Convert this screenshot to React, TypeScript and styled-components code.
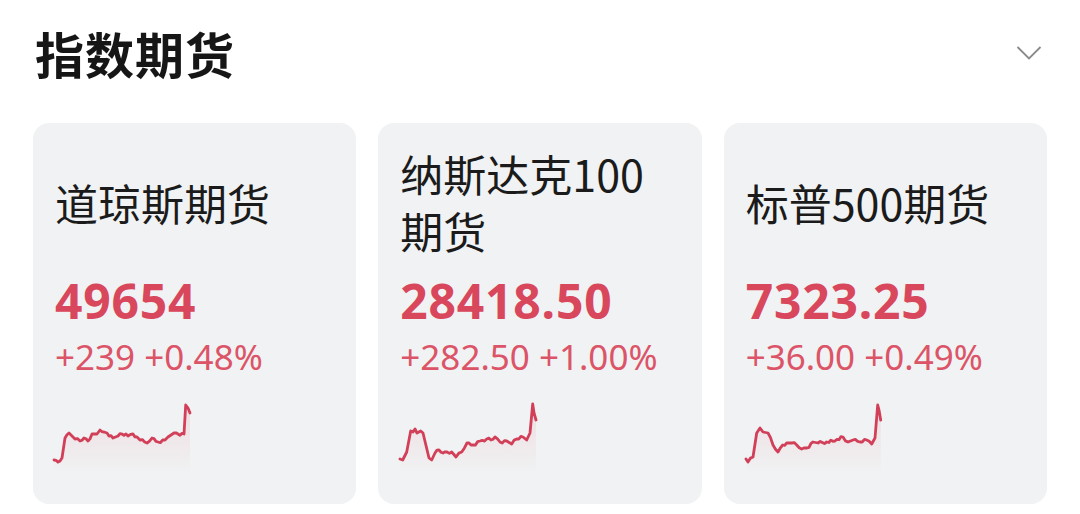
import styled, { createGlobalStyle } from 'styled-components';

type Future = {
	name: string;
	price: string;
	change: string;
	percent: string;
	points: [number, number][];
};

const futures: Future[] = [
	{
		name: '道琼斯期货',
		price: '49654',
		change: '+239',
		percent: '+0.48%',
		points: [
			[3, 65], [9, 66], [11, 63], [14, 43], [18, 38], [21, 41], [24, 44], [29, 46], [33, 43], [37, 46],
			[41, 39], [46, 39], [49, 35], [53, 37], [56, 38], [62, 43], [67, 41], [71, 39], [77, 41], [82, 39],
			[86, 42], [89, 45], [96, 48], [101, 43], [107, 47], [114, 45], [117, 42], [120, 40], [123, 38],
			[127, 39], [133, 39], [134.7, 10], [137, 13], [139, 18],
		],
	},
	{
		name: '纳斯达克100期货',
		price: '28418.50',
		change: '+282.50',
		percent: '+1.00%',
		points: [
			[4, 64], [6.7, 65], [10.7, 57], [14.7, 36], [17, 37], [19, 34], [21, 38], [24.7, 36], [27, 38],
			[33, 63], [35.7, 65], [39, 58], [43, 55], [47, 58], [51, 57], [55.7, 57], [60, 62], [65.7, 57],
			[71, 48], [77, 50], [84, 46], [90.7, 44], [95, 45], [99, 42], [104, 47], [110.7, 46], [115.7, 49],
			[120.7, 44], [127, 42], [130.7, 45], [134, 38], [136.7, 9], [138, 18], [140, 25],
		],
	},
	{
		name: '标普500期货',
		price: '7323.25',
		change: '+36.00',
		percent: '+0.49%',
		points: [
			[4, 64], [6, 67], [11, 62], [14.7, 38], [18, 33], [21, 37], [26, 38], [31, 50], [36, 57],
			[40.7, 50], [44.7, 48], [49.7, 48], [54.7, 50], [59.7, 54], [65, 53], [71, 47], [76, 48],
			[84.7, 47], [93, 46], [101, 42], [106, 47], [111, 45], [118, 47], [124.7, 45], [129.7, 49],
			[133, 43], [135.7, 10], [137, 15], [138.7, 25],
		],
	},
];

// add a small deterministic wobble between the traced points so the line reads as tick data
function roughen(points: [number, number][]): [number, number][] {
	const out: [number, number][] = [];
	points.forEach((p, i) => {
		out.push(p);
		const next = points[i + 1];
		if (!next || next[0] - p[0] < 4 || Math.abs(next[1] - p[1]) > 12) return;
		const steps = Math.floor((next[0] - p[0]) / 2);
		for (let s = 1; s < steps; s++) {
			const t = s / steps;
			const wobble = ((s * 7 + i * 3) % 5) - 2;
			out.push([p[0] + (next[0] - p[0]) * t, p[1] + (next[1] - p[1]) * t + wobble * 0.7]);
		}
	});
	return out;
}

function Sparkline({ points, id }: { points: [number, number][]; id: string }) {
	const pts = roughen(points);
	const line = pts.map(([x, y]) => `${x.toFixed(1)},${y.toFixed(1)}`).join(' ');
	const first = pts[0];
	const last = pts[pts.length - 1];
	const area = `M${first[0]},78 L${line.replace(/ /g, ' L')} L${last[0]},78 Z`;
	return (
		<Chart width="150" height="80" viewBox="0 0 150 80">
			<defs>
				<linearGradient id={id} x1="0" y1="0" x2="0" y2="1">
					<stop offset="0" stopColor="#e4566b" stopOpacity="0.14" />
					<stop offset="1" stopColor="#e4566b" stopOpacity="0" />
				</linearGradient>
			</defs>
			<path d={area} fill={`url(#${id})`} />
			<polyline
				points={line}
				fill="none"
				stroke="#d23f58"
				strokeWidth="2.8"
				strokeLinejoin="round"
				strokeLinecap="round"
			/>
		</Chart>
	);
}

export default function App() {
	return (
		<Page>
			<GlobalStyle />
			<Header>
				<Title>指数期货</Title>
				<Chevron width="26" height="16" viewBox="0 0 26 16">
					<polyline points="1.5,2 13,13.5 24.5,2" fill="none" stroke="#8a8a8a" strokeWidth="1.8" />
				</Chevron>
			</Header>
			<Cards>
				{futures.map((f, i) => (
					<Card key={f.name}>
						<NameBlock>
							<Name>{f.name}</Name>
						</NameBlock>
						<Price>{f.price}</Price>
						<Change>
							{f.change} {f.percent}
						</Change>
						<Sparkline points={f.points} id={`spark-${i}`} />
					</Card>
				))}
			</Cards>
		</Page>
	);
}

const GlobalStyle = createGlobalStyle`
	body {
		margin: 0;
		background: #ffffff;
		font-family: "Noto Sans", "Noto Sans CJK SC", sans-serif;
	}
`;

const Page = styled.div`
	width: 1080px;
	height: 514px;
	padding: 0 33px;
	box-sizing: border-box;
	background: #ffffff;
	overflow: hidden;
`;

const Header = styled.div`
	height: 104px;
	margin-bottom: 19px;
	padding: 0 3px 0 2px;
	display: flex;
	align-items: center;
	justify-content: space-between;
`;

const Title = styled.h1`
	margin: 0;
	font-family: "Noto Sans CJK SC", sans-serif;
	font-size: 49px;
	font-weight: 700;
	color: #161616;
	letter-spacing: 1px;
`;

const Chevron = styled.svg`
	margin-right: 2px;
	margin-top: 2px;
`;

const Cards = styled.div`
	display: grid;
	grid-template-columns: repeat(3, 1fr);
	gap: 22px;
`;

const Card = styled.div`
	height: 381px;
	box-sizing: border-box;
	padding: 19px 18px 0 22px;
	border-radius: 16px;
	background: #f0f2f3;
	display: flex;
	flex-direction: column;
`;

const NameBlock = styled.div`
	height: 120px;
	display: flex;
	align-items: center;
`;

const Name = styled.div`
	font-family: "Noto Sans CJK SC", sans-serif;
	font-size: 43px;
	line-height: 57px;
	color: #1b1b1b;
	max-width: 266px;
`;

const Price = styled.div`
	margin-top: 10px;
	font-size: 48px;
	line-height: 58px;
	font-weight: 700;
	letter-spacing: 0.8px;
	color: #d8475c;
`;

const Change = styled.div`
	margin-top: 6px;
	font-size: 35px;
	line-height: 42px;
	color: #dc5467;
	white-space: nowrap;
`;

const Chart = styled.svg`
	margin-top: 17px;
	margin-left: -4px;
	display: block;
`;
